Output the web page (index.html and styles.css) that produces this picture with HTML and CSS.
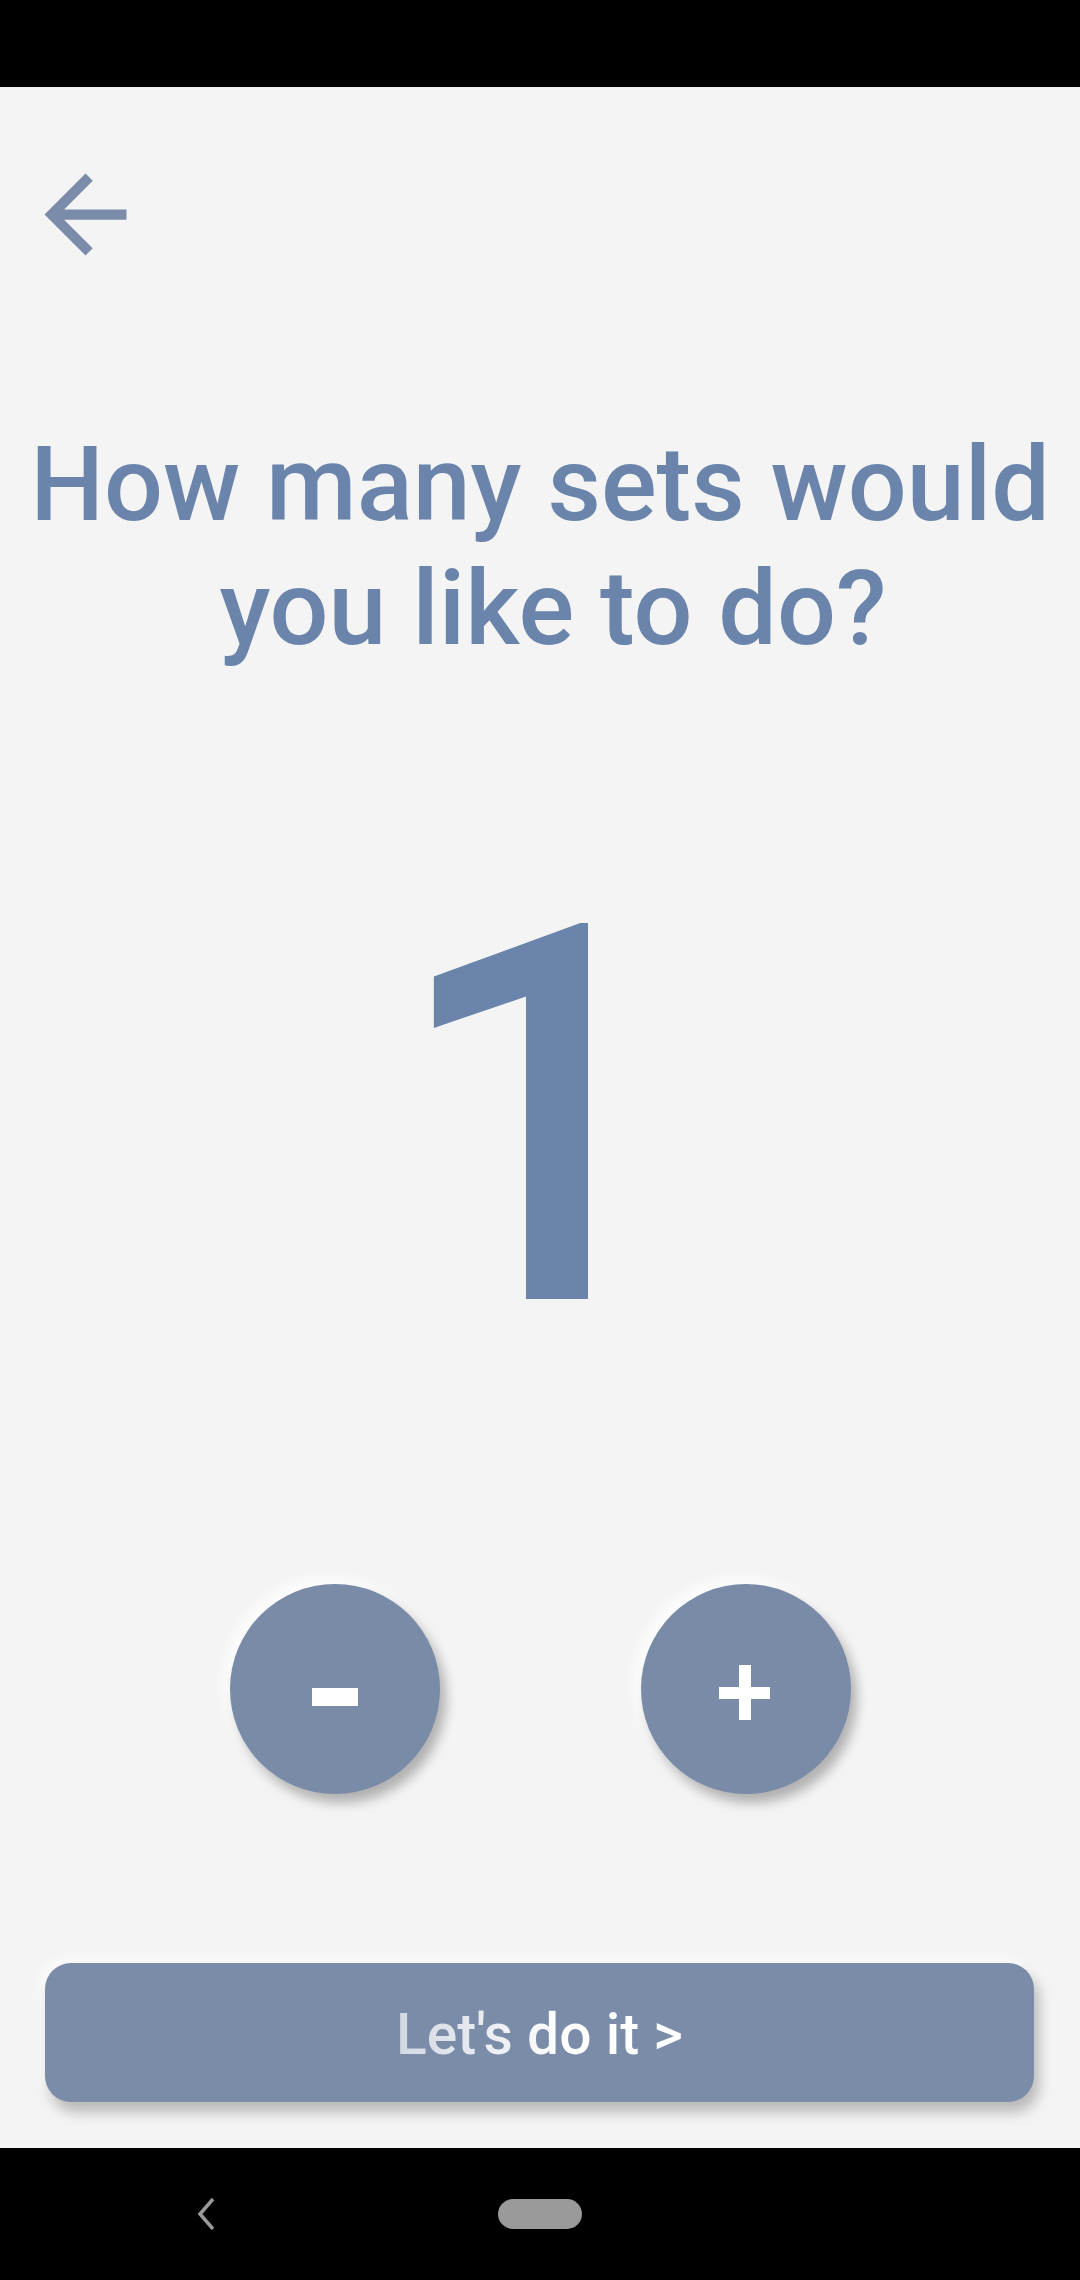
FILE: index.html
```html
<!DOCTYPE html>
<html lang="en">
<head>
<meta charset="utf-8">
<title>Sets</title>
<link rel="stylesheet" href="styles.css">
</head>
<body>
<div class="screen">
  <div class="status-bar"></div>
  <main class="content">
    <div class="top-row">
      <svg class="back-icon" viewBox="0 0 24 24" aria-label="Back">
        <path d="M20 11H7.83l5.59-5.59L12 4l-8 8 8 8 1.41-1.41L7.83 13H20v-2z"/>
      </svg>
    </div>
    <h1 class="title">How many sets would<br><span class="title-l2">you like to do?</span></h1>
    <div class="count">1</div>
    <div class="controls">
      <button class="round-btn minus" aria-label="-"></button>
      <button class="round-btn plus" aria-label="+"></button>
    </div>
    <div class="cta-wrap">
      <button class="cta"><span class="cta-text">Let's do it &gt;</span></button>
    </div>
  </main>
  <div class="nav-bar">
    <svg class="nav-back" viewBox="0 0 20 32"><path d="M17 1 L4 16 L17 31"/></svg>
    <div class="nav-home"></div>
  </div>
</div>
</body>
</html>
```
FILE: styles.css
```css
* { box-sizing: border-box; }
html, body { margin: 0; padding: 0; }
body {
  width: 1080px;
  height: 2280px;
  background: #f4f4f4;
  font-family: Roboto, "Noto Sans", sans-serif;
  overflow: hidden;
}
.screen {
  display: flex;
  flex-direction: column;
  height: 2280px;
}
.status-bar {
  height: 87px;
  background: #000;
  flex: none;
}
.content {
  flex: 1;
  display: flex;
  flex-direction: column;
}
.top-row {
  height: 189px;
  padding: 66px 0 0 24px;
}
.back-icon {
  width: 123px;
  height: 123px;
  display: block;
  fill: #7a8ca9;
}
.title {
  margin: 147px 0 0 0;
  font-size: 104px;
  line-height: 124px;
  font-weight: 500;
  color: #6a84ab;
  text-align: center;
  letter-spacing: 0;
}
.title-l2 {
  padding-left: 26px;
}
.count {
  margin-top: 185px;
  font-size: 527px;
  line-height: 527px;
  height: 527px;
  font-weight: 500;
  color: #6a84ab;
  text-align: center;
}
.controls {
  margin-top: 201px;
  display: flex;
  justify-content: center;
  gap: 201px;
}
.round-btn {
  width: 210px;
  height: 210px;
  border-radius: 50%;
  border: none;
  background: #7a8ba8;
  box-shadow: 6px 9px 12px rgba(0,0,0,0.28), -6px -6px 14px rgba(255,255,255,0.9);
  position: relative;
  padding: 0;
}
.minus::before {
  content: "";
  position: absolute;
  left: 82px;
  top: 104px;
  width: 46px;
  height: 18px;
  background: #fff;
}
.plus::before {
  content: "";
  position: absolute;
  left: 78px;
  top: 103px;
  width: 51px;
  height: 12px;
  background: #fff;
}
.plus::after {
  content: "";
  position: absolute;
  left: 98px;
  top: 81px;
  width: 12px;
  height: 55px;
  background: #fff;
}
.cta-wrap {
  margin-top: 169px;
  padding: 0 46px 0 45px;
}
.cta {
  width: 100%;
  height: 139px;
  border: none;
  border-radius: 26px;
  background: #7a8ca8;
  box-shadow: 5px 10px 14px rgba(0,0,0,0.25), -4px -4px 12px rgba(255,255,255,0.9);
  display: flex;
  align-items: center;
  justify-content: center;
  font-family: Roboto, "Noto Sans", sans-serif;
  font-size: 57px;
  font-weight: 500;
  padding: 0;
}
.cta-text {
  background: linear-gradient(90deg, #d2d8e2 0%, #ffffff 60%, #ffffff 100%);
  -webkit-background-clip: text;
  background-clip: text;
  color: transparent;
  padding-top: 3px;
}
.nav-bar {
  height: 132px;
  background: #000;
  flex: none;
  display: flex;
  align-items: flex-start;
  padding-top: 51px;
  position: relative;
}
.nav-back {
  position: absolute;
  left: 196px;
  top: 50px;
  width: 20px;
  height: 32px;
  fill: none;
  stroke: #9a9a9a;
  stroke-width: 3.5;
}
.nav-home {
  margin-left: 498px;
  width: 84px;
  height: 30px;
  border-radius: 15px;
  background: #9a9a9a;
}
```
